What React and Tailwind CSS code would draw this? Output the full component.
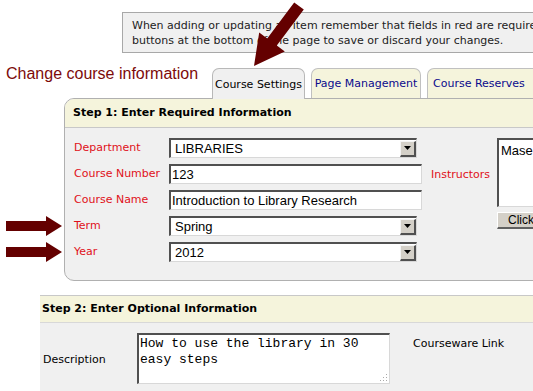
import React from "react";

const V = "font-['DejaVu_Sans',Verdana,sans-serif]";
const A = "font-['Liberation_Sans',Arial,sans-serif]";
const M = "font-['Liberation_Mono','Courier_New',monospace]";

const inset =
  "bg-white border-t-2 border-l-2 border-t-[#505050] border-l-[#505050] border-b border-r border-b-[#d8d8d8] border-r-[#d8d8d8]";

function DropBtn() {
  return (
    <div className="w-[16px] h-[16px] bg-[#d4d0c8] border-t border-l border-t-[#f4f4f4] border-l-[#f4f4f4] border-b-2 border-r-2 border-b-[#505050] border-r-[#505050] flex items-center justify-center shrink-0">
      <svg width="7" height="4" viewBox="0 0 7 4">
        <path d="M0 0 H7 L3.5 4 Z" fill="#000" />
      </svg>
    </div>
  );
}

function Select({ value }) {
  return (
    <div
      className={`w-[248px] h-[20px] ${inset} flex items-center justify-between pl-[4px] text-[13px] text-black ${A}`}
    >
      <span>{value}</span>
      <DropBtn />
    </div>
  );
}

function Input({ value }) {
  return (
    <div className={`w-[253px] h-[20px] ${inset} flex items-center pl-[1px] text-[13px] text-black ${A}`}>
      {value}
    </div>
  );
}

function Row({ label, children }) {
  return (
    <div className="flex items-center h-[20px]">
      <div className={`w-[95px] pt-[1px] text-[11px] text-[#e0101a] ${V}`}>{label}</div>
      {children}
    </div>
  );
}

export default function App() {
  return (
    <div className="relative w-[533px] h-[391px] overflow-hidden bg-white">
      {/* info box */}
      <div className="pt-[12px] pl-[122px]">
        <div
          className={`w-[440px] h-[41px] bg-[#f0f0f0] border border-[#a8a8a8] pl-[9px] pt-[5px] text-[11px] leading-[15px] text-[#222] whitespace-nowrap overflow-hidden ${V}`}
        >
          <div>When adding or updating an item remember that fields in red are required.</div>
          <div>buttons at the bottom of the page to save or discard your changes.</div>
        </div>
      </div>

      {/* heading + tabs */}
      <div className="flex mt-[15px] h-[31px]">
        <div className={`w-[212px] shrink-0 pl-[6px] text-[16px] leading-[12px] text-[#7d0a0a] ${A}`}>
          Change course information
        </div>
        <div className="flex gap-[6px] shrink-0">
          <div
            className={`w-[93px] h-[31px] bg-[#f0f0f0] border border-b-0 border-[#b8b8b8] rounded-t-[7px] flex items-center justify-center text-[11px] text-black pt-[3px] whitespace-nowrap ${V}`}
          >
            Course Settings
          </div>
          <div
            className={`w-[110px] h-[30px] bg-[#f5f4dc] border border-b-0 border-[#c0c0c0] rounded-t-[7px] flex items-center justify-center text-[11px] text-[#0a0a8c] pt-[2px] whitespace-nowrap ${V}`}
          >
            Page Management
          </div>
          <div
            className={`w-[112px] h-[30px] bg-[#f5f4dc] border border-b-0 border-[#c0c0c0] rounded-t-[7px] flex items-center pl-[5px] text-[11px] text-[#0a0a8c] pt-[2px] whitespace-nowrap ${V}`}
          >
            Course Reserves
          </div>
        </div>
      </div>

      {/* step 1 */}
      <div className="ml-[64px] -mt-[1px] w-[500px] h-[183px] border border-[#b0b0b0] rounded-l-[10px] overflow-hidden bg-[#f0f0f0]">
        <div
          className={`h-[29px] bg-[#f5f4dc] border-b border-[#c8c8c8] flex items-center pl-[8px] text-[11px] font-bold text-black ${V}`}
        >
          Step 1: Enter Required Information
        </div>
        <div className="flex pt-[10px] pl-[9px]">
          <div className="flex flex-col gap-[6px]">
            <Row label="Department">
              <Select value="LIBRARIES" />
            </Row>
            <Row label="Course Number">
              <Input value="123" />
            </Row>
            <Row label="Course Name">
              <Input value="Introduction to Library Research" />
            </Row>
            <Row label="Term">
              <Select value="Spring" />
            </Row>
            <Row label="Year">
              <Select value="2012" />
            </Row>
          </div>
          <div className={`ml-[9px] pt-[29px] w-[66px] text-[11px] text-[#e0101a] ${V}`}>Instructors</div>
          <div className="flex flex-col">
            <div className={`w-[60px] h-[69px] ${inset} pl-[2px] pt-[1px] text-[13px] text-black ${A}`}>
              Mase
            </div>
            <div
              className={`mt-[5px] w-[60px] h-[17px] bg-[#d4d0c8] border-t border-l border-t-white border-l-white border-b-2 border-r-2 border-b-[#606060] border-r-[#606060] pl-[10px] text-[12px] leading-[14px] text-black ${A}`}
            >
              Click
            </div>
          </div>
        </div>
      </div>

      {/* step 2 */}
      <div className="ml-[40px] mt-[14px] w-[500px] border-t border-[#c8c8c8] bg-[#f0f0f0]">
        <div
          className={`h-[27px] bg-[#f5f4dc] border-b border-[#d8d8d8] flex items-center pl-[2px] text-[11px] font-bold text-black ${V}`}
        >
          Step 2: Enter Optional Information
        </div>
        <div className="flex pt-[10px] h-[80px]">
          <div className={`w-[97px] pl-[3px] pt-[19px] text-[11px] text-black ${V}`}>Description</div>
          <div className={`relative w-[253px] h-[51px] ${inset} pl-[1px] pt-[1px] text-[13px] leading-[16px] text-black ${M}`}>
            <div>How to use the library in 30</div>
            <div>easy steps</div>
            <svg className="absolute right-[1px] bottom-[1px]" width="9" height="9" viewBox="0 0 9 9">
              <rect x="7" y="1" width="1" height="1" fill="#aaa" />
              <rect x="4" y="4" width="1" height="1" fill="#aaa" />
              <rect x="7" y="4" width="1" height="1" fill="#aaa" />
              <rect x="1" y="7" width="1" height="1" fill="#aaa" />
              <rect x="4" y="7" width="1" height="1" fill="#aaa" />
              <rect x="7" y="7" width="1" height="1" fill="#aaa" />
            </svg>
          </div>
          <div className={`ml-[23px] pt-[3px] text-[11px] text-black ${V}`}>Courseware Link</div>
        </div>
      </div>

      {/* overlay arrows */}
      <svg className="absolute left-0 top-0 pointer-events-none" width="533" height="391" viewBox="0 0 533 391">
        <polygon
          points="294.2,2.4 303.8,9.6 276.8,45.6 284.8,51.6 254,66 259.2,32.4 267.2,38.4"
          fill="#640000"
        />
        <polygon points="6,221 46,221 46,216 62,226 46,236 46,231 6,231" fill="#640000" />
        <polygon points="6,247 46,247 46,242 62,252 46,262 46,257 6,257" fill="#640000" />
      </svg>
    </div>
  );
}
